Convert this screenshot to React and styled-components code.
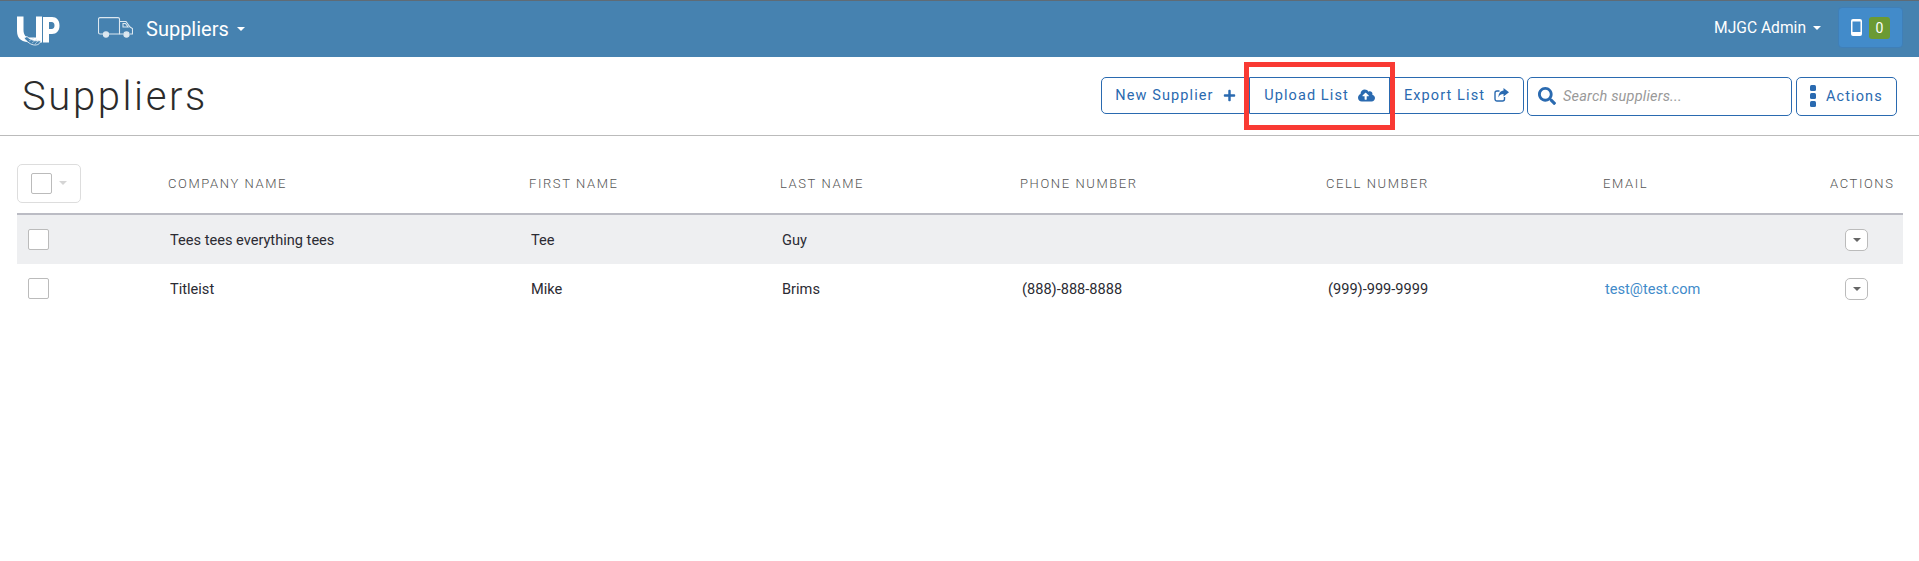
import styled, { createGlobalStyle } from "styled-components";
import { FaPlus, FaCloudUploadAlt, FaSearch } from "react-icons/fa";

const GlobalStyle = createGlobalStyle`
  html, body {
    margin: 0;
    padding: 0;
    background: #ffffff;
    font-family: Roboto, "Liberation Sans", sans-serif;
    color: #2b2b33;
  }
  * {
    box-sizing: border-box;
  }
`;

const TopBar = styled.nav`
  height: 57px;
  background: #4682b0;
  border-top: 1px solid #5f6b75;
  display: flex;
  align-items: center;
  padding: 0 16px 0 16px;
  color: #ffffff;
`;

const Logo = styled.svg`
  width: 44px;
  height: 32px;
  margin-right: 38px;
  margin-top: 3px;
`;

const TruckIcon = styled.svg`
  width: 35px;
  height: 21px;
  margin-right: 13px;
  margin-top: -3px;
`;

const BrandMenu = styled.div`
  font-size: 20px;
  display: flex;
  align-items: center;
  gap: 8px;
  margin-top: -1px;
`;

const Caret = styled.span`
  display: inline-block;
  width: 0;
  height: 0;
  border-left: 4px solid transparent;
  border-right: 4px solid transparent;
  border-top: 4px solid ${(props) => props.color || "#ffffff"};
`;

const UserMenu = styled.div`
  margin-left: auto;
  font-size: 15.6px;
  display: flex;
  align-items: center;
  gap: 7px;
  margin-right: 17px;
  margin-top: -3px;
`;

const DeviceButton = styled.div`
  width: 65px;
  height: 41px;
  background: #428bca;
  border: 1px solid #3f7fb8;
  border-radius: 4px;
  display: flex;
  align-items: center;
  justify-content: center;
  gap: 7px;
  margin-top: -3px;
`;

const PhoneIcon = styled.svg`
  width: 11px;
  height: 17px;
`;

const CountBadge = styled.span`
  width: 21px;
  height: 22px;
  background: #6b9a33;
  border-radius: 3px;
  font-size: 14px;
  display: flex;
  align-items: center;
  justify-content: center;
`;

const PageHeader = styled.header`
  height: 79px;
  border-bottom: 1px solid #bbbbbb;
  display: flex;
  align-items: center;
  padding: 0 22px 0 22px;
`;

const Title = styled.h1`
  margin: 0 auto 0 0;
  font-size: 40px;
  font-weight: 300;
  letter-spacing: 2.6px;
  color: #2b2b2b;
`;

const ButtonGroup = styled.div`
  position: relative;
  display: flex;
  margin-right: 3px;
  margin-top: -2px;
`;

const ToolButton = styled.button`
  height: 37px;
  width: ${(props) => props.width}px;
  background: #ffffff;
  border: 1px solid #2a6ab0;
  border-left-width: ${(props) => (props.first ? 1 : 0)}px;
  border-radius: ${(props) => props.radius};
  color: #2a6ab0;
  font-family: inherit;
  font-size: 14.5px;
  letter-spacing: 1.1px;
  display: flex;
  align-items: center;
  justify-content: center;
  gap: 9px;
  padding: 0;
`;

const ShareIcon = styled.svg`
  width: 15px;
  height: 14px;
`;

const Highlight = styled.div`
  position: absolute;
  left: 143px;
  top: -15px;
  width: 151px;
  height: 68px;
  border: 5px solid #f93a33;
`;

const SearchBox = styled.div`
  width: 265px;
  height: 39px;
  border: 1px solid #2a6ab0;
  border-radius: 5px;
  display: flex;
  align-items: center;
  gap: 7px;
  padding-left: 10px;
  margin-right: 4px;
  color: #2a6ab0;
  font-size: 18px;
`;

const SearchText = styled.span`
  font-size: 14.5px;
  font-style: italic;
  color: #999999;
  letter-spacing: 0.2px;
`;

const ActionsButton = styled.button`
  width: 101px;
  height: 39px;
  background: #ffffff;
  border: 1px solid #2a6ab0;
  border-radius: 5px;
  color: #2a6ab0;
  font-family: inherit;
  font-size: 14.5px;
  letter-spacing: 1.1px;
  display: flex;
  align-items: center;
  gap: 10px;
  padding: 0 0 0 13px;
`;

const Kebab = styled.span`
  display: flex;
  flex-direction: column;
  gap: 2px;
`;

const KebabDot = styled.i`
  width: 6px;
  height: 6px;
  border-radius: 1.5px;
  background: #2a6ab0;
`;

const Table = styled.section`
  margin: 0 16px 0 17px;
`;

const columns = "150px 361px 251px 240px 306px 277px 227px 1fr";

const HeadRow = styled.div`
  height: 79px;
  padding-top: 17px;
  display: grid;
  grid-template-columns: ${columns};
  align-items: center;
  border-bottom: 2px solid #bbbcc4;
`;

const HeadCell = styled.div`
  font-size: 13px;
  font-weight: 300;
  letter-spacing: 1.6px;
  color: #555555;
  text-transform: uppercase;
  padding-left: 1px;
`;

const SelectAll = styled.div`
  width: 64px;
  height: 39px;
  border: 1px solid #dddddd;
  border-radius: 5px;
  display: flex;
  align-items: center;
  gap: 7px;
  padding-left: 13px;
`;

const Check = styled.span`
  display: block;
  width: 21px;
  height: 21px;
  background: #ffffff;
  border: 1px solid #bbbbbb;
  border-radius: 2px;
`;

const Row = styled.div`
  height: 49px;
  display: grid;
  grid-template-columns: ${columns};
  align-items: center;
  background: ${(props) => (props.shaded ? "#eeeff1" : "#ffffff")};
`;

const CheckCell = styled.div`
  padding-left: 11px;
`;

const Cell = styled.div`
  font-size: 14.6px;
  color: #2b2b33;
  padding-left: 3px;
`;

const EmailLink = styled.a`
  color: #428bca;
  text-decoration: none;
`;

const ActionCell = styled.div`
  padding-left: 16px;
`;

const RowMenu = styled.button`
  width: 23px;
  height: 22px;
  padding: 0;
  background: #ffffff;
  border: 1px solid #bbbbbb;
  border-radius: 5px;
  display: flex;
  align-items: center;
  justify-content: center;
`;

const rows = [
  { company: "Tees tees everything tees", first: "Tee", last: "Guy", phone: "", cell: "", email: "", shaded: true },
  { company: "Titleist", first: "Mike", last: "Brims", phone: "(888)-888-8888", cell: "(999)-999-9999", email: "test@test.com" },
];

export default function App() {
  return (
    <>
      <GlobalStyle />
      <TopBar>
        <Logo viewBox="0 0 44 32">
          <path d="M1 1.500h6.500V15c0 5 2.500 7.500 6 7.500h6.500V1.500h6V27.500h-10C6 27.500 1 24 1 16z" fill="#ffffff" />
          <path d="M27 2h9c4.500 0 7.500 3 7.500 8.500S40.500 19 36 19h-3v8.500h-6zM33 7v7h2.500c2 0 3-1.300 3-3.500S37.500 7 35.500 7z" fill="#ffffff" fillRule="evenodd" />
          <path d="M8 23c3 4 7 7 11 7s5-2 6-4.500c-5 1-10 0-14-4z" fill="#4682b0" stroke="#ffffff" strokeWidth="0.8" />
          <path d="M13 26l5-3M16 28l5-4M19 29l4-4" stroke="#cfe0ec" strokeWidth="0.6" fill="none" />
        </Logo>
        <TruckIcon viewBox="0 0 35 21" fill="none" stroke="#dce8f0" strokeWidth="1.1">
          <path d="M5 17H2a1.500 1.500 0 0 1-1.500-1.500V2A1.500 1.500 0 0 1 2 .6h18A1.500 1.500 0 0 1 21.500 2v15H11" />
          <path d="M21.500 4.500h6.500l4 5.500 2.500 1.500V17h-2.500M25.500 17h-4" />
          <path d="M25 6.500h2.500l2.600 3.500H25z" />
          <circle cx="8" cy="17.500" r="2.600" fill="#dce8f0" />
          <circle cx="28.500" cy="17.500" r="2.600" fill="#dce8f0" />
        </TruckIcon>
        <BrandMenu>
          Suppliers <Caret />
        </BrandMenu>
        <UserMenu>
          MJGC Admin <Caret />
        </UserMenu>
        <DeviceButton>
          <PhoneIcon viewBox="0 0 11 17">
            <path d="M2 0h7a2 2 0 0 1 2 2v13a2 2 0 0 1-2 2H2a2 2 0 0 1-2-2V2a2 2 0 0 1 2-2zM1.500 2.500v10.500h8V2.500z" fill="#ffffff" fillRule="evenodd" />
          </PhoneIcon>
          <CountBadge>0</CountBadge>
        </DeviceButton>
      </TopBar>

      <PageHeader>
        <Title>Suppliers</Title>
        <ButtonGroup>
          <ToolButton first width={149} radius="5px 0 0 5px">
            New Supplier <FaPlus size={13} />
          </ToolButton>
          <ToolButton width={140} radius="0">
            Upload List <FaCloudUploadAlt size={17} />
          </ToolButton>
          <ToolButton width={134} radius="0 5px 5px 0">
            Export List
            <ShareIcon viewBox="0 0 15 14">
              <path d="M10.500 9v2a2 2 0 0 1-2 2H3a2 2 0 0 1-2-2V5a2 2 0 0 1 2-2h2.500" fill="none" stroke="#2a6ab0" strokeWidth="1.400" />
              <path d="M9.500 0L15 4.200 9.500 8.400V6C7 6 5.500 6.800 4.500 9.500 4.300 5.500 6.300 2.800 9.500 2.400z" fill="#2a6ab0" />
            </ShareIcon>
          </ToolButton>
          <Highlight />
        </ButtonGroup>
        <SearchBox>
          <FaSearch />
          <SearchText>Search suppliers...</SearchText>
        </SearchBox>
        <ActionsButton>
          <Kebab>
            <KebabDot />
            <KebabDot />
            <KebabDot />
          </Kebab>
          Actions
        </ActionsButton>
      </PageHeader>

      <Table>
        <HeadRow>
          <SelectAll>
            <Check />
            <Caret color="#d5d5d5" />
          </SelectAll>
          <HeadCell>Company Name</HeadCell>
          <HeadCell>First Name</HeadCell>
          <HeadCell>Last Name</HeadCell>
          <HeadCell>Phone Number</HeadCell>
          <HeadCell>Cell Number</HeadCell>
          <HeadCell>Email</HeadCell>
          <HeadCell>Actions</HeadCell>
        </HeadRow>
        {rows.map((row) => (
          <Row key={row.company} shaded={row.shaded}>
            <CheckCell>
              <Check />
            </CheckCell>
            <Cell>{row.company}</Cell>
            <Cell>{row.first}</Cell>
            <Cell>{row.last}</Cell>
            <Cell>{row.phone}</Cell>
            <Cell>{row.cell}</Cell>
            <Cell>{row.email && <EmailLink href="#">{row.email}</EmailLink>}</Cell>
            <ActionCell>
              <RowMenu>
                <Caret color="#666666" />
              </RowMenu>
            </ActionCell>
          </Row>
        ))}
      </Table>
    </>
  );
}
